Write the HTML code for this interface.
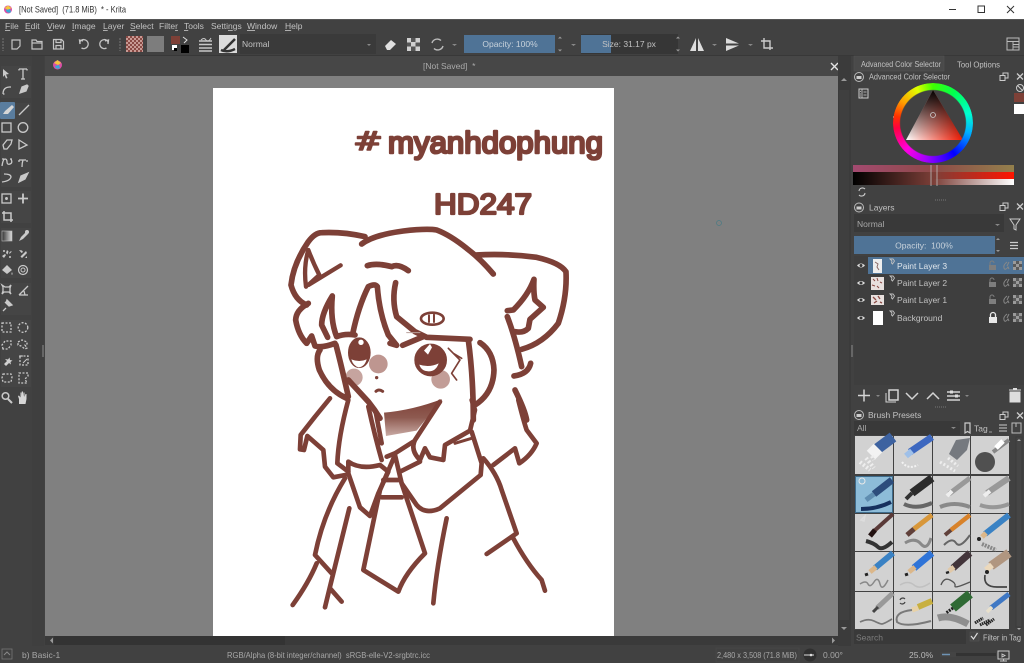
<!DOCTYPE html>
<html lang="en"><head><meta charset="utf-8"><title>[Not Saved] - Krita</title>
<style>
html,body{margin:0;padding:0;background:#414141;overflow:hidden}
body{width:1024px;height:663px;position:relative;filter:blur(.35px)}
svg{position:absolute;left:0;top:0;display:block}
text{font-family:"Liberation Sans",sans-serif;font-size:8.5px;fill:#c2c2c2;white-space:pre}
#wheel{position:absolute;left:893px;top:83px;width:80px;height:80px;border-radius:50%;
background:conic-gradient(#40ff00 0deg,#00ff50 35deg,#00ffd0 75deg,#00b0ff 105deg,#0000ff 145deg,#a000ff 190deg,#ff00e0 225deg,#ff0040 262deg,#ff3000 280deg,#ffa000 305deg,#e0ff00 335deg,#40ff00 360deg);
-webkit-mask:radial-gradient(circle,transparent 32.5px,#000 33.5px);mask:radial-gradient(circle,transparent 32.5px,#000 33.5px)}
</style></head><body>
<svg width="1024" height="663" viewBox="0 0 1024 663" xmlns="http://www.w3.org/2000/svg">
<defs>
<linearGradient id="triH" x1="0" x2="1" y1="0" y2="0"><stop offset="0" stop-color="#fff"/><stop offset="1" stop-color="#f01800"/></linearGradient>
<linearGradient id="triV" x1="0" x2="0" y1="0" y2="1"><stop offset="0" stop-color="#000"/><stop offset="1" stop-color="#000" stop-opacity="0"/></linearGradient>
<linearGradient id="s1" x1="0" x2="1"><stop offset="0" stop-color="#a34a70"/><stop offset=".5" stop-color="#8e4a48"/><stop offset="1" stop-color="#93804c"/></linearGradient>
<linearGradient id="s2" x1="0" x2="1"><stop offset="0" stop-color="#000"/><stop offset=".5" stop-color="#7c3f38"/><stop offset="1" stop-color="#ff1500"/></linearGradient>
<linearGradient id="s3" x1="0" x2="1"><stop offset="0" stop-color="#000"/><stop offset=".5" stop-color="#7c3f38"/><stop offset="1" stop-color="#fff"/></linearGradient>
<linearGradient id="neck" x1="0" x2="0" y1="0" y2="1"><stop offset="0" stop-color="#7d4037"/><stop offset=".5" stop-color="#8e5a50"/><stop offset="1" stop-color="#c9aaa4"/></linearGradient>
<linearGradient id="grad" x1="0" x2="1"><stop offset="0" stop-color="#333"/><stop offset="1" stop-color="#ddd"/></linearGradient>
<pattern id="chk" width="4" height="4" patternUnits="userSpaceOnUse"><rect width="4" height="4" fill="#8a4a44"/><rect width="2" height="2" fill="#c89a94"/><rect x="2" y="2" width="2" height="2" fill="#c89a94"/></pattern>
</defs>

<!-- base -->
<rect width="1024" height="663" fill="#414141"/>
<rect width="1024" height="19" fill="#fff"/>
<rect y="19" width="1024" height="1" fill="#555"/>
<rect y="55" width="1024" height="1" fill="#383838"/>
<rect x="45" y="56" width="793" height="20" fill="#474747"/>

<!-- title -->
<circle cx="8" cy="9.500" r="4" fill="#d94fa8"/><path d="M4.500 8 L8 5.500 L11.500 8 L8 10Z" fill="#f4c53e"/><path d="M6 10 a3 3 0 0 0 5 2 l-1-3z" fill="#38a9d8"/>
<text x="19" y="12.500" textLength="107" lengthAdjust="spacingAndGlyphs" style="font-size:8.800px;fill:#333">[Not Saved]  (71.8 MiB)  * - Krita</text>
<path d="M949 9.500h7" stroke="#333" stroke-width="1"/>
<rect x="978" y="6" width="6.500" height="6.500" fill="none" stroke="#333"/>
<path d="M1007 6l7 7M1014 6l-7 7" stroke="#333"/>

<!-- menu -->
<g>
<text x="5" y="29"><tspan text-decoration="underline">F</tspan>ile</text>
<text x="25" y="29"><tspan text-decoration="underline">E</tspan>dit</text>
<text x="47" y="29"><tspan text-decoration="underline">V</tspan>iew</text>
<text x="72" y="29"><tspan text-decoration="underline">I</tspan>mage</text>
<text x="103" y="29"><tspan text-decoration="underline">L</tspan>ayer</text>
<text x="130" y="29"><tspan text-decoration="underline">S</tspan>elect</text>
<text x="159" y="29">Filte<tspan text-decoration="underline">r</tspan></text>
<text x="184" y="29"><tspan text-decoration="underline">T</tspan>ools</text>
<text x="211" y="29">Setti<tspan text-decoration="underline">n</tspan>gs</text>
<text x="247" y="29"><tspan text-decoration="underline">W</tspan>indow</text>
<text x="285" y="29"><tspan text-decoration="underline">H</tspan>elp</text>
</g>

<!-- toolbar -->
<g fill="none" stroke="#c4c4c4" stroke-width="1.200">
<path d="M3 38v13" stroke="#5c5c5c" stroke-width="2" stroke-dasharray="2 1"/>
<path d="M12 40h8v6l-3 3h-5z"/>
<path d="M32 40h4l1 1.500h5V49H32z" /><path d="M32 43h10" />
<path d="M53.500 39.500h8l2 2v7.500h-10z"/><path d="M56 39.500v3h5v-3M56 49v-3.500h5V49"/>
<path d="M81 41h-1v3M81 40.500a4.500 4.500 0 1 1 .5 7.500M80 44l-.5-4 3.500 1" stroke-width="1.300"/>
<path d="M107 41h1v3M107 40.500a4.500 4.500 0 1 0-.5 7.500M108 44l.5-4-3.500 1" stroke-width="1.300"/>
<path d="M120 38v13" stroke="#5c5c5c" stroke-width="2" stroke-dasharray="2 1"/>
</g>
<rect x="126" y="36" width="17" height="16" fill="url(#chk)"/>
<rect x="147" y="36" width="17" height="16" fill="#7d7d7d"/>
<rect x="171" y="36" width="9" height="8" fill="#7d4037"/>
<rect x="181" y="45" width="8" height="8" fill="#000"/><rect x="172" y="45" width="5" height="5" fill="#fff"/><rect x="174" y="48" width="3" height="3" fill="#000"/>
<path d="M183 37l4 3-3 3" fill="none" stroke="#ddd"/>
<g stroke="#c8c8c8" stroke-width="1.500" fill="none"><path d="M199 41h13M199 44.500h13M199 48h13M199 51h13" /><path d="M201 40q3-3 5 0t5-2" stroke-width="1"/></g>
<rect x="219" y="35" width="18" height="18" fill="#dcdcdc"/><path d="M224 50l11-11M221 50q6 3 14-1" stroke="#333" stroke-width="2.500" fill="none"/>
<rect x="240" y="34" width="136" height="20" fill="#3a3a3a"/>
<text x="242" y="47">Normal</text><path d="M367 44h4l-2 2z" fill="#888"/>
<path d="M385 46l6-6 5 4-6 6h-3z" fill="#e0e0e0"/>
<g fill="#d0d0d0"><rect x="407" y="38" width="13" height="13"/></g><g fill="#555"><rect x="411" y="38" width="4.500" height="4"/><rect x="407" y="42.500" width="4" height="4"/><rect x="415.500" y="42.500" width="4.500" height="4"/><rect x="411" y="46.500" width="4.500" height="4.500"/></g>
<path d="M432 43a5.500 5.500 0 0 1 9-2.500M443 46a5.500 5.500 0 0 1-9 2.500" fill="none" stroke="#bbb" stroke-width="1.400"/>
<path d="M452 44h5l-2.500 2z" fill="#888"/>
<rect x="464" y="35" width="91" height="18" fill="#4f7396"/>
<text x="510" y="47" text-anchor="middle" style="fill:#c8d2db">Opacity: 100%</text>
<path d="M558 38.500l2-2 2 2zM558 49.500l2 2 2-2z" fill="#999"/>
<path d="M571 44h5l-2.500 2z" fill="#888"/>
<rect x="581" y="34" width="97" height="20" fill="#363636"/>
<rect x="581" y="35" width="30" height="18" fill="#4f7396"/>
<text x="629" y="47" text-anchor="middle">Size: 31.17 px</text>
<path d="M676 38.500l2-2 2 2zM676 49.500l2 2 2-2z" fill="#999"/>
<path d="M696 38l-6 13h6zM698 38l6 13h-6z" fill="#dcdcdc"/>
<path d="M712 44h5l-2.500 2z" fill="#888"/>
<path d="M726 38l13 5.500h-13zM726 45.500h13l-13 5.500z" fill="#dcdcdc"/>
<path d="M748 44h5l-2.500 2z" fill="#888"/>
<path d="M764 38v10h9M761 41h9v9" fill="none" stroke="#ccc" stroke-width="1.400"/>
<rect x="1007" y="38" width="12" height="12" fill="none" stroke="#bbb"/><path d="M1007 41.500h12M1013 41.500V50M1013 44.500h6M1013 47h6" stroke="#bbb" stroke-width=".9"/>

<!-- toolbox -->
<rect x="1" y="66" width="30" height="32" fill="#454545"/>
<rect x="1" y="103" width="30" height="84" fill="#454545"/>
<rect x="1" y="191" width="30" height="32" fill="#454545"/>
<rect x="1" y="228" width="30" height="50" fill="#454545"/>
<rect x="1" y="283" width="30" height="32" fill="#454545"/>
<rect x="1" y="320" width="30" height="67" fill="#454545"/>
<rect x="0" y="102" width="15" height="17" fill="#5a7d9e" rx="1"/>
<rect x="32" y="56" width="12" height="590" fill="#3f3f3f"/>
<rect x="42" y="345" width="2" height="12" fill="#666"/>
<g fill="none" stroke="#c9c9c9" stroke-width="1.300">
<path d="M3 69l6 5-3 .5 1.500 3.500-1.500.5-1.500-3.500-1.500 2z" fill="#c9c9c9" stroke="none"/>
<path d="M19 69h8M23 69v10M21 79h4M19 69v1.500M27 69v1.500"/>
<path d="M3 94q0-7 7-7M3 94h1.500M9 87h2" />
<path d="M20 93l2-6 5-2 1 1-2 5-6 2z" fill="#c9c9c9"/>
<path d="M3 114l2-3 7-6 2 2-6 7z" fill="#d6d6d6" stroke="none"/>
<path d="M19 115l10-10" />
<rect x="2" y="123" width="9" height="9" />
<circle cx="23" cy="127.500" r="4.800"/>
<path d="M4 149l-1-4 4-5h5l-1 4-4 5z"/>
<path d="M19 140l8 5-8 4z"/>
<path d="M2 166q1-7 3-7t2 3 3 2 1-5M4 159h-2M10 159h2" />
<path d="M19 160h7M23 160q-1 3-1 7M19 160v2M27 160v2"/>
<path d="M2 182q8-1 9-5 0-3-7-3" />
<path d="M19 182l2-6 7-3-3 6z" fill="#c9c9c9"/>
<rect x="2" y="194" width="9" height="9"/>
<circle cx="6.500" cy="198.500" r=".8" fill="#c9c9c9"/>
<path d="M18 198.500h10M23 193.500v10" stroke-width="1.800"/>
<path d="M4 211v9h9M2 213h9v9" stroke-width="1.500"/>
</g>
<rect x="2" y="231" width="10" height="10" fill="url(#grad)" stroke="#bbb" stroke-width=".6"/>
<g fill="#c9c9c9" stroke="none">
<path d="M19 241l2-4 5-5 2 2-5 5z"/><circle cx="27" cy="232" r="2"/>
<path d="M2 256l3-2 1 1-2 3zM7 250l1.500 1.500-1 3-1.500-1.500zM9 253l2-2 .7.7-2 2z" /><circle cx="4" cy="251" r="1"/><circle cx="10" cy="257" r="1"/>
<path d="M19 250l3 .5 1 1.500-1.500 1zM26 251l1 2-5 5-1.500-1.500zM27 256v2h-2z"/>
<path d="M7 265l5 5-5 4-5-4z"/><path d="M12 272q1 2 0 3-1-1 0-3z"/>
<circle cx="23" cy="270" r="4.500" fill="none" stroke="#c9c9c9" stroke-width="1.200"/><circle cx="23" cy="270" r="2" fill="none" stroke="#c9c9c9"/>
</g>
<g fill="none" stroke="#c9c9c9" stroke-width="1.300">
<path d="M2 285l3 2h4l2-2-1 3v4l1 2-2-2H4l-2 2 1-3v-4z"/>
<path d="M19 295l9-9M19 295h9M24 291l1 4"/>
<path d="M3 311l3-3M5 302l4 4 3-1-5-5-1 3z" fill="#c9c9c9"/>
<g stroke-dasharray="2 1.500">
<rect x="2" y="323" width="9" height="9"/><circle cx="23" cy="327.500" r="4.800"/>
<path d="M3 349l-1-4 3-4h6v4l-3 4z"/><path d="M18 342l4-2 5 2v2l-2 1 2 3-2 1-4-3-3-1z"/>
<rect x="20" y="356" width="8" height="9"/>
<path d="M3 374h8l1 3-1 5H3l-1-4zM19 373h9v3l-3 3 2 4h-8z"/>
</g>
<circle cx="5.500" cy="396" r="3.300" stroke-width="1.500"/><path d="M8 399l4 4" stroke-width="2"/>
</g>
<path d="M4 364l3-3-2-2 3 .5 1.500-2 .5 2.500 2.500.5-2 1.500.5 2.500-2-1.500-3 3z" fill="#d0d0d0"/>
<path d="M19 404v-5l-1-3 1-.5 1.500 2v-5h1v4l.3-5h1.200v5l.5-4h1v4.500l1-3h1v5l-1 5z" fill="#d6d6d6"/>
<path d="M19 356l4 0M23 363l4-4" stroke="#c9c9c9"/>

<!-- canvas -->
<rect x="45" y="76" width="793" height="560" fill="#808080"/>
<rect x="213" y="88" width="401" height="548" fill="#fff"/>
<circle cx="57.500" cy="65" r="4.500" fill="#d94fa8"/><path d="M54 63l3.500-3 3.500 3-3 2z" fill="#f4c53e"/><path d="M55 66a3 3 0 0 0 5 2l-1-3z" fill="#38a9d8"/>
<text x="423" y="69" style="fill:#aaa">[Not Saved]  *</text>
<path d="M831 63l7 7M838 63l-7 7" stroke="#e4e4e4" stroke-width="1.400"/>

<!-- artwork text -->
<text x="353" y="150" textLength="30" lengthAdjust="spacingAndGlyphs" style="font-size:26px;fill:#7d4037;stroke:#7d4037;stroke-width:1.500px;stroke-linejoin:round;font-family:'DejaVu Sans',sans-serif">#</text>
<text x="388" y="153" textLength="215" lengthAdjust="spacingAndGlyphs" style="font-size:31px;fill:#7d4037;stroke:#7d4037;stroke-width:2.500px;stroke-linejoin:round;font-family:'Liberation Sans',sans-serif">myanhdophung</text>
<text x="434" y="214" textLength="98" lengthAdjust="spacingAndGlyphs" style="font-size:29px;fill:#7d4037;stroke:#7d4037;stroke-width:2.200px;stroke-linejoin:round;font-family:'Liberation Sans',sans-serif">HD247</text>

<!-- artwork upper -->
<g transform="translate(280,220) scale(.3333)" fill="none" stroke="#7d4037" stroke-width="17" stroke-linecap="round" stroke-linejoin="round">
<circle cx="295" cy="432" r="28" fill="#a8736b" fill-opacity=".75" stroke="none"/>
<circle cx="222" cy="472" r="26" fill="#a8736b" fill-opacity=".65" stroke="none"/>
<circle cx="482" cy="478" r="28" fill="#a8736b" fill-opacity=".7" stroke="none"/>
<path d="M80 255Q45 240 33 195Q40 130 85 65Q105 38 125 38Q190 35 255 50"/>
<path d="M245 72Q280 45 370 33Q440 25 470 30Q510 45 560 85Q600 115 640 162"/>
<path d="M590 105Q680 100 770 112Q840 128 858 155Q862 230 835 310Q790 370 725 388"/>
<path d="M85 90Q70 140 78 200M85 90Q100 130 118 165L85 195M85 195L182 136" stroke-width="13"/>
<path d="M262 137Q290 128 335 140Q355 130 385 152"/>
<path d="M85 250Q48 270 47 300Q55 345 80 370L95 348L105 378Q125 385 165 370"/>
<path d="M157 228Q125 280 125 315L143 352M157 228Q150 300 170 350Q195 340 225 345"/>
<path d="M218 342Q235 260 265 200Q285 190 292 200Q298 280 325 345L350 376L330 370"/>
<path d="M347 188Q335 240 350 290L405 335L440 352L570 358M368 376L430 350"/>
<ellipse cx="457" cy="296" rx="34" ry="18" stroke-width="8"/><path d="M447 286v20M462 284v22" stroke-width="6"/>
<path d="M380 338h40" stroke="#b9a09c" stroke-width="3"/>
<path d="M762 178Q745 225 700 270L682 272M762 178Q760 215 765 240L790 262L750 298L745 325Q730 340 705 335"/>
<path d="M682 290Q705 350 725 440M702 468Q745 462 752 430"/>
<path d="M168 375Q185 440 205 530M120 390Q105 410 118 450Q145 510 200 535M205 480L265 545Q285 570 300 595"/>
<ellipse cx="238" cy="398" rx="30" ry="42" fill="#7d4037" stroke-width="8"/>
<path d="M214 418q24 10 46 0q-6 22-24 24q-16-4-22-24z" fill="#fff" stroke="none"/><circle cx="243" cy="367" r="8" fill="#fff" stroke="none"/>
<ellipse cx="452" cy="420" rx="44" ry="44" fill="#7d4037" stroke-width="10"/>
<path d="M418 434q30 10 58-4q-8 24-30 24q-22 0-28-20z" fill="#fff" stroke="none"/><path d="M432 392l18-20 6 10-12 22z" fill="#fff" stroke="none"/>
<path d="M505 385L540 420L515 460L530 480M520 400L545 415" stroke-width="5"/>
<circle cx="290" cy="473" r="5" fill="#7d4037" stroke="none"/>
<path d="M288 514q8-8 20 0" stroke-width="9"/>
<path d="M565 360Q580 470 580 600M600 368Q640 395 642 450Q640 520 585 555"/>
<path d="M705 510Q735 570 740 600"/>
</g>

<!-- artwork lower -->
<g transform="translate(280,400) scale(.3333)" fill="none" stroke="#7d4037" stroke-width="14" stroke-linecap="round" stroke-linejoin="round">
<path d="M312 38Q400 30 486 -3L410 92L318 108Z" fill="url(#neck)" stroke="none"/>
<path d="M150 -5L105 50L62 105L60 148L72 150L82 108L130 150L135 200L160 232L196 225"/>
<path d="M205 0Q175 110 172 190L205 215" />
<path d="M265 20Q285 110 305 180M287 35L305 130"/>
<path d="M205 185Q240 210 300 195L325 215L295 280L270 348L240 322L205 220Z"/>
<path d="M320 170L345 160L400 125"/>
<path d="M345 165L300 270L250 510L355 575Q375 520 435 460L365 250Z"/>
<path d="M310 240H360M305 292H365"/>
<path d="M360 215L420 185M365 250L410 315Q435 345 480 325L602 225L605 190L575 95"/>
<path d="M480 5L405 120Q390 150 420 180L435 145L450 172L490 180L495 135L570 92L585 30L575 0"/>
<path d="M525 130L575 115" stroke-width="9"/>
<path d="M715 0Q730 60 740 90L770 130Q755 165 718 190L705 145L640 195"/>
<path d="M610 175Q650 220 665 270L710 400L620 462"/>
<path d="M700 415Q740 490 785 540L795 572"/>
<path d="M500 355Q470 500 460 610"/>
<path d="M195 235Q130 340 105 465L155 520M110 490Q85 550 38 615"/>
<path d="M208 325L150 560L135 622M150 565L185 605"/>
</g>

<!-- canvas scrollbars -->
<rect x="45" y="636" width="793" height="9" fill="#3a3a3a"/>
<rect x="54" y="636" width="231" height="9" fill="#333"/>
<path d="M50 640.500l3-3v6z" fill="#999"/><path d="M835 640.500l-3-3v6z" fill="#999"/>
<rect x="838" y="56" width="13" height="590" fill="#3b3b3b"/>
<rect x="839" y="90" width="10" height="530" fill="#3f3f3f"/>
<path d="M844 78l-3 3h6z" fill="#999"/><path d="M844 630l-3-3h6z" fill="#999"/>
<rect x="851" y="345" width="2" height="12" fill="#666"/>
<path d="M719 223m-2.500 0a2.500 2.500 0 1 0 5 0a2.500 2.500 0 1 0-5 0" fill="none" stroke="#4a7a84" stroke-width=".7"/>

<!-- color selector dock -->
<rect x="854" y="56" width="90" height="15" fill="#4a4a4a" stroke="#555" stroke-width=".5"/>
<text x="861" y="67" textLength="80" lengthAdjust="spacingAndGlyphs">Advanced Color Selector</text>
<text x="957" y="67.500" textLength="43" lengthAdjust="spacingAndGlyphs">Tool Options</text>
<circle cx="859" cy="77" r="4.500" fill="none" stroke="#bbb"/><rect x="856.500" y="76" width="5" height="3" fill="#ccc"/>
<text x="869" y="79.500" textLength="81" lengthAdjust="spacingAndGlyphs">Advanced Color Selector</text>
<g fill="none" stroke="#ccc" stroke-width="1"><rect x="1000" y="75.500" width="5" height="5"/><path d="M1003 75.500v-2.500h5v5h-3"/><path d="M1017 73.500l6 6M1023 73.500l-6 6" stroke-width="1.300"/>
<circle cx="1020" cy="88" r="3.500"/><path d="M1017.500 85.500l5 5"/>
<rect x="859" y="89" width="9" height="9"/><path d="M862 89v9M860 91.500h1M860 94h1M860 96h1M863.500 92h3M863.500 95h3" stroke-width=".8"/></g>
<rect x="1014" y="93" width="10" height="9" fill="#7d4037"/><rect x="1014" y="104" width="10" height="10" fill="#fff"/>
<path d="M933 90L963 140H906Z" fill="url(#triH)"/><path d="M933 90L963 140H906Z" fill="url(#triV)"/>
<circle cx="933" cy="115" r="2.500" fill="none" stroke="#ccc" stroke-width=".8"/>
<path d="M893 117h7" stroke="#eee" stroke-width="1"/>
<rect x="853" y="165" width="161" height="7" fill="url(#s1)"/>
<rect x="853" y="172" width="161" height="7" fill="url(#s2)"/>
<rect x="853" y="179" width="161" height="6" fill="url(#s3)"/>
<path d="M931 165v21M937 165v21" stroke="#bbb" stroke-width=".8"/>
<path d="M856 192a3.500 3.500 0 0 1 6-2M862 194a3.500 3.500 0 0 1-6 2" stroke="#ccc" fill="none" stroke-width="1.100" transform="translate(3 -1)"/>
<path d="M935 200h12" stroke="#777" stroke-dasharray="1 1"/>

<!-- layers dock -->
<circle cx="859" cy="207.500" r="4.500" fill="none" stroke="#bbb"/><rect x="856.500" y="206.500" width="5" height="3" fill="#ccc"/>
<text x="869" y="210.500">Layers</text>
<g fill="none" stroke="#ccc"><rect x="1000" y="205.500" width="5" height="5"/><path d="M1003 205.500v-2.500h5v5h-3"/><path d="M1017 203.500l6 6M1023 203.500l-6 6" stroke-width="1.300"/></g>
<rect x="854" y="214" width="150" height="18" fill="#393939"/>
<text x="857" y="227" style="fill:#a8a8a8">Normal</text><path d="M995 224h5l-2.500 2z" fill="#888"/>
<path d="M1010 219h10l-4 6v5l-2-1v-4z" fill="none" stroke="#ccc"/>
<rect x="854" y="236" width="141" height="18" fill="#4f7396"/>
<text x="924" y="248.500" text-anchor="middle" style="fill:#c8d2db">Opacity:  100%</text>
<path d="M996 240l2-2 2 2zM996 250l2 2 2-2z" fill="#999"/>
<path d="M1010 242.500h8M1010 245.500h8M1010 248.500h8" stroke="#ccc" stroke-width="1.300"/>
<rect x="854" y="256" width="170" height="129" fill="#3e3e3e"/>
<rect x="868" y="257" width="156" height="17" fill="#4f7396"/>
<g>
<path d="M857 265.500q4-4 8 0q-4 4-8 0z" fill="#ddd"/><circle cx="861" cy="265.500" r="1.500" fill="#333"/>
<path d="M857 283q4-4 8 0q-4 4-8 0z" fill="#ddd"/><circle cx="861" cy="283" r="1.500" fill="#333"/>
<path d="M857 300q4-4 8 0q-4 4-8 0z" fill="#ddd"/><circle cx="861" cy="300" r="1.500" fill="#333"/>
<path d="M857 318q4-4 8 0q-4 4-8 0z" fill="#ddd"/><circle cx="861" cy="318" r="1.500" fill="#333"/>
</g>
<rect x="873" y="259" width="9" height="14" fill="#eee"/><path d="M875 262l3 2-1 3 2 3" stroke="#8a6a66" fill="none"/>
<rect x="871" y="277" width="13" height="13" fill="#e8e0de"/><path d="M873 279l2 2M877 278l1 3M880 282l2 1M872 285l3 1M877 286l2 2" stroke="#8a4a44"/>
<rect x="871" y="295" width="13" height="10" fill="#e8e0de"/><path d="M873 297l3 3M878 296l2 3M874 303l3-2M880 302l2 1" stroke="#8a4a44" stroke-width="1.300"/>
<rect x="873" y="311" width="10" height="14" fill="#fff"/>
<g fill="none" stroke="#c0c0c0" stroke-width=".9"><path d="M890 259l3 0 1.500 2-2 3-1-1 .5-2zM890 276l3 0 1.500 2-2 3-1-1 .5-2zM890 294l3 0 1.500 2-2 3-1-1 .5-2zM890 311l3 0 1.500 2-2 3-1-1 .5-2z"/></g>
<text x="897" y="269" style="fill:#e0e6ec">Paint Layer 3</text>
<text x="897" y="286">Paint Layer 2</text>
<text x="897" y="303">Paint Layer 1</text>
<text x="897" y="321">Background</text>
<g fill="#7e7e7e">
<rect x="989" y="265" width="7" height="5"/><rect x="989" y="282" width="7" height="5"/><rect x="989" y="299" width="7" height="5"/>
</g>
<g fill="none" stroke="#7e7e7e"><path d="M990 265v-2a2 2 0 0 1 4 0M990 282v-2a2 2 0 0 1 4 0M990 299v-2a2 2 0 0 1 4 0"/></g>
<rect x="989" y="317" width="8" height="6" fill="#e8e8e8"/><path d="M990.500 317v-2a2.500 2.500 0 0 1 5 0v2" fill="none" stroke="#e8e8e8" stroke-width="1.300"/>
<g fill="none" stroke="#888" stroke-width="1"><path d="M1007 262q-4 3-3 6t4-1l1 2M1009 262l-2 4"/><path d="M1007 279q-4 3-3 6t4-1l1 2M1009 279l-2 4"/><path d="M1007 296q-4 3-3 6t4-1l1 2M1009 296l-2 4"/><path d="M1007 314q-4 3-3 6t4-1l1 2M1009 314l-2 4"/></g>
<g fill="#9a9a9a"><rect x="1013" y="261" width="9" height="9"/><rect x="1013" y="278" width="9" height="9"/><rect x="1013" y="295" width="9" height="9"/><rect x="1013" y="313" width="9" height="9"/></g>
<g fill="#5a5a5a"><rect x="1016" y="261" width="3" height="3"/><rect x="1013" y="264" width="3" height="3"/><rect x="1019" y="264" width="3" height="3"/><rect x="1016" y="267" width="3" height="3"/>
<rect x="1016" y="278" width="3" height="3"/><rect x="1013" y="281" width="3" height="3"/><rect x="1019" y="281" width="3" height="3"/><rect x="1016" y="284" width="3" height="3"/>
<rect x="1016" y="295" width="3" height="3"/><rect x="1013" y="298" width="3" height="3"/><rect x="1019" y="298" width="3" height="3"/><rect x="1016" y="301" width="3" height="3"/>
<rect x="1016" y="313" width="3" height="3"/><rect x="1013" y="316" width="3" height="3"/><rect x="1019" y="316" width="3" height="3"/><rect x="1016" y="319" width="3" height="3"/></g>

<!-- layer buttons -->
<g fill="none" stroke="#d4d4d4" stroke-width="1.500">
<path d="M858 395.500h12M864 389.500v12"/>
<rect x="889" y="390" width="9" height="10"/><path d="M886 393v9h10" stroke-width="1"/>
<path d="M906 393l6 6 6-6M927 399l6-6 6 6"/>
<path d="M947 392h13M947 396h13M947 400h13"/>
</g>
<rect x="950" y="390.500" width="3" height="3" fill="#ddd"/><rect x="955" y="394.500" width="3" height="3" fill="#ddd"/>
<path d="M876 395h4l-2 2zM965 395h4l-2 2z" fill="#888"/>
<path d="M1010 392h10v10h-10zM1009 390h12" fill="#ddd" stroke="#ddd"/><rect x="1013" y="388" width="4" height="2" fill="#ddd"/>
<path d="M935 407h12" stroke="#777" stroke-dasharray="1 1"/>

<!-- presets dock -->
<circle cx="859" cy="415" r="4.500" fill="none" stroke="#bbb"/><rect x="856.500" y="414" width="5" height="3" fill="#ccc"/>
<text x="868" y="418">Brush Presets</text>
<g fill="none" stroke="#ccc"><rect x="1000" y="414.500" width="5" height="5"/><path d="M1003 414.500v-2.500h5v5h-3"/><path d="M1017 412.500l6 6M1023 412.500l-6 6" stroke-width="1.300"/></g>
<rect x="854" y="421" width="106" height="14" fill="#393939"/>
<text x="857" y="431" style="fill:#a8a8a8">All</text><path d="M951 427h5l-2.500 2z" fill="#888"/>
<path d="M965 423h5v10l-2.500-1.500L965 433z" fill="none" stroke="#ccc" stroke-width="1.200"/>
<text x="974" y="431.500">Tag</text><path d="M989 432h3" stroke="#999"/>
<path d="M999 425h8M999 428h8M999 431h8" stroke="#ccc"/>
<rect x="1012" y="423" width="9" height="10" fill="none" stroke="#bbb"/><path d="M1016 423v4" stroke="#bbb"/>

<!-- tiles -->
<g>
<g fill="#d2d2d2">
<rect x="855" y="436" width="38" height="38"/><rect x="894" y="436" width="38" height="38"/><rect x="933" y="436" width="37" height="38"/><rect x="971" y="436" width="38" height="38"/>
<rect x="894" y="476" width="38" height="37"/><rect x="933" y="476" width="37" height="37"/><rect x="971" y="476" width="38" height="37"/>
<rect x="855" y="514" width="38" height="37"/><rect x="894" y="514" width="38" height="37"/><rect x="933" y="514" width="37" height="37"/><rect x="971" y="514" width="38" height="37"/>
<rect x="855" y="552" width="38" height="39"/><rect x="894" y="552" width="38" height="39"/><rect x="933" y="552" width="37" height="39"/><rect x="971" y="552" width="38" height="39"/>
<rect x="855" y="592" width="38" height="37"/><rect x="894" y="592" width="38" height="37"/><rect x="933" y="592" width="37" height="37"/><rect x="971" y="592" width="38" height="37"/>
</g>
<rect x="855.500" y="476.500" width="37" height="36" fill="#8dbcd8" stroke="#3f6c8c"/>
<g fill="none" stroke-linecap="butt">
<!-- r1 -->
<path d="M893 437l-16 12" stroke="#3d62a0" stroke-width="11"/><path d="M878 448l-7 7" stroke="#f2f2f2" stroke-width="12"/>
<path d="M860 462l10 8M866 458l8 10M872 456l2 4" stroke="#eee" stroke-width="4" stroke-dasharray="2 2"/>
<path d="M932 437l-22 15" stroke="#3d68c0" stroke-width="7"/><path d="M912 451l-6 5" stroke="#9fc0e8" stroke-width="6"/><path d="M902 462q6 8 16 3" stroke="#f2f2f2" stroke-width="2" stroke-dasharray="2 1.500"/>
<path d="M970 438l-14 2-7 14 8 6 10-10z" fill="#75797f" stroke="none"/><path d="M940 462l15 9M948 458l10 8" stroke="#eee" stroke-width="3" stroke-dasharray="2 2"/>
<circle cx="985" cy="462" r="10" fill="#3a3a3a" stroke="none" opacity=".85"/><path d="M1009 440l-16 12" stroke="#888" stroke-width="4"/><path d="M1003 441l-7 7" stroke="#fff" stroke-width="5"/>
<!-- r2 -->
<path d="M892 480l-18 14" stroke="#2d4d7c" stroke-width="7"/><path d="M874 494l-8 6" stroke="#5f8db0" stroke-width="5"/><path d="M861 509q16 0 30-7" stroke="#16305e" stroke-width="4"/><circle cx="862" cy="481" r="3" stroke="#e8e8e8" stroke-width="1"/>
<path d="M932 478l-20 15" stroke="#2b2b2b" stroke-width="8"/><path d="M912 493l-6 6" stroke="#333" stroke-width="4"/><path d="M904 504q12 6 28-1" stroke="#666" stroke-width="4"/>
<path d="M970 478l-21 16" stroke="#999" stroke-width="5"/><path d="M952 491l-5 5" stroke="#eee" stroke-width="4"/><path d="M940 507q14-6 30 0" stroke="#777" stroke-width="4" opacity=".8"/>
<path d="M1009 478l-22 15" stroke="#999" stroke-width="6"/><path d="M990 491l-6 5" stroke="#eee" stroke-width="4"/><path d="M980 505q14 5 29-1" stroke="#888" stroke-width="4" opacity=".8"/>
<!-- r3 -->
<path d="M893 514l-20 18" stroke="#5a3a38" stroke-width="4"/><path d="M875 530l-5 6" stroke="#211" stroke-width="5"/><path d="M866 541q8 2 12 6t14-5" stroke="#333" stroke-width="4"/><path d="M861 520l4-4-1 5z" stroke="#ddd" stroke-width="1.500"/>
<path d="M932 515l-18 14" stroke="#d8973a" stroke-width="5"/><path d="M914 529l-7 6" stroke="#60403a" stroke-width="5"/><path d="M905 543q10-6 16 1t10-6" stroke="#777" stroke-width="3" opacity=".8"/>
<path d="M970 515l-19 15" stroke="#d8822a" stroke-width="4.500"/><path d="M951 530l-6 5" stroke="#60403a" stroke-width="4"/><path d="M944 545q8-8 12-2t14-8" stroke="#666" stroke-width="2"/>
<path d="M1009 515l-24 19" stroke="#3a82c4" stroke-width="6"/><path d="M986 533l-4 4" stroke="#dbb78a" stroke-width="5"/><circle cx="979" cy="539" r="2" fill="#222" stroke="none"/><path d="M982 544l14 6" stroke="#888" stroke-width="4" stroke-dasharray="2 1"/>
<!-- r4 -->
<path d="M893 553l-18 15" stroke="#3a82c4" stroke-width="6"/><path d="M876 567l-6 5" stroke="#dbb78a" stroke-width="5"/><path d="M868 574l-3 1" stroke="#222" stroke-width="3"/><path d="M860 584q6-4 8 0t6-2 6 2 8-4" stroke="#888" stroke-width="1.500"/>
<path d="M932 553l-18 15" stroke="#2f74d8" stroke-width="7"/><path d="M915 567l-6 5" stroke="#dbb78a" stroke-width="5"/><path d="M908 574l-3 1" stroke="#222" stroke-width="3"/><path d="M900 585q8-5 14 0t16-2" stroke="#c0c0c0" stroke-width="1.500"/>
<path d="M970 553l-17 15" stroke="#42343a" stroke-width="7"/><path d="M954 567l-5 4" stroke="#e0c8a8" stroke-width="5"/><path d="M949 572l-3 1" stroke="#222" stroke-width="2.500"/><path d="M941 585q3-8 9-5t5 6 15-4" stroke="#555" stroke-width="1.300"/>
<path d="M1009 553l-18 13" stroke="#b09680" stroke-width="9"/><path d="M992 565l-6 5" stroke="#ecd9bc" stroke-width="6"/><circle cx="987" cy="572" r="2" fill="#222" stroke="none"/><path d="M985 575q-2 12 12 12h10" stroke="#444" stroke-width="1.700"/>
<!-- r5 -->
<path d="M893 593l-16 15" stroke="#999" stroke-width="5"/><path d="M878 607l-5 5" stroke="#444" stroke-width="3"/><path d="M860 622q8-4 14-1t8 3 10-5" stroke="#777" stroke-width="1.700"/>
<path d="M932 601l-14 6" stroke="#c8b040" stroke-width="6"/><path d="M918 608l-6 2" stroke="#e8d2a8" stroke-width="5"/><path d="M912 610q-18 2-15 12 8 6 34-1" stroke="#7a7a7a" stroke-width="2"/><path d="M900 600a3 3 0 0 1 5-1M905 602a3 3 0 0 1-5 1" stroke="#444" stroke-width="1.200"/>
<path d="M970 594l-17 14" stroke="#2f6a34" stroke-width="9"/><path d="M953 608l-7 5" stroke="#222" stroke-width="3" stroke-dasharray="2 1"/><path d="M938 618q12-4 30 6" stroke="#777" stroke-width="7" opacity=".75"/>
<path d="M1009 594l-18 14" stroke="#3f78c4" stroke-width="5"/><path d="M992 607l-5 5" stroke="#e8e0cc" stroke-width="3.500"/><path d="M975 623l8-5M980 625l10-5M986 625l8-6" stroke="#222" stroke-width="3" stroke-dasharray="1.500 .7"/>
</g>
</g>
<rect x="1016" y="437" width="6" height="190" fill="#454545" stroke="#3a3a3a"/>
<path d="M1017 441l2-2 2 2zM1017 628l2 2 2-2z" fill="#aaa"/>

<!-- search -->
<rect x="854" y="630" width="112" height="14" fill="#393939"/>
<text x="856" y="640.500" style="fill:#7d7d7d">Search</text>
<rect x="970" y="632" width="9" height="9" fill="#454545" stroke="#555" stroke-width=".6"/><path d="M971 636l2.500 3 4-6" fill="none" stroke="#ddd" stroke-width="1.200"/>
<text x="983" y="640.500" textLength="38" lengthAdjust="spacingAndGlyphs">Filter in Tag</text>

<!-- status bar -->
<rect x="2" y="649" width="10" height="10" fill="none" stroke="#777" stroke-width=".8"/><path d="M4 655l3-3 3 3" fill="none" stroke="#888"/>
<text x="22" y="658" style="fill:#a8a8a8">b) Basic-1</text>
<text x="227" y="658" textLength="203" lengthAdjust="spacingAndGlyphs" style="fill:#a8a8a8">RGB/Alpha (8-bit integer/channel)  sRGB-elle-V2-srgbtrc.icc</text>
<text x="717" y="658" textLength="80" lengthAdjust="spacingAndGlyphs" style="fill:#a8a8a8">2,480 x 3,508 (71.8 MiB)</text>
<rect x="716" y="648" width="83" height="14" fill="none" stroke="#4a4a4a" stroke-width=".6"/>
<circle cx="810" cy="655" r="6.500" fill="#303030"/><path d="M804 655h10" stroke="#ddd"/><circle cx="811" cy="655" r="1.300" fill="#ddd"/>
<text x="823" y="658" style="fill:#a8a8a8">0.00°</text>
<text x="909" y="658" style="fill:#bbb">25.0%</text>
<rect x="940" y="653" width="56" height="3" fill="#333"/><rect x="940" y="652" width="16" height="5" fill="#444"/>
<path d="M942 654.500h8" stroke="#6f93b4" stroke-width="1.500"/>
<rect x="998" y="651" width="11" height="8" fill="none" stroke="#ccc"/><path d="M1000 661h7M1003.500 659v2M1002 654l3 1.500-3 1.500z" stroke="#ccc" stroke-width=".9" fill="none"/>
</svg>
<div id="wheel"></div>
</body></html>
